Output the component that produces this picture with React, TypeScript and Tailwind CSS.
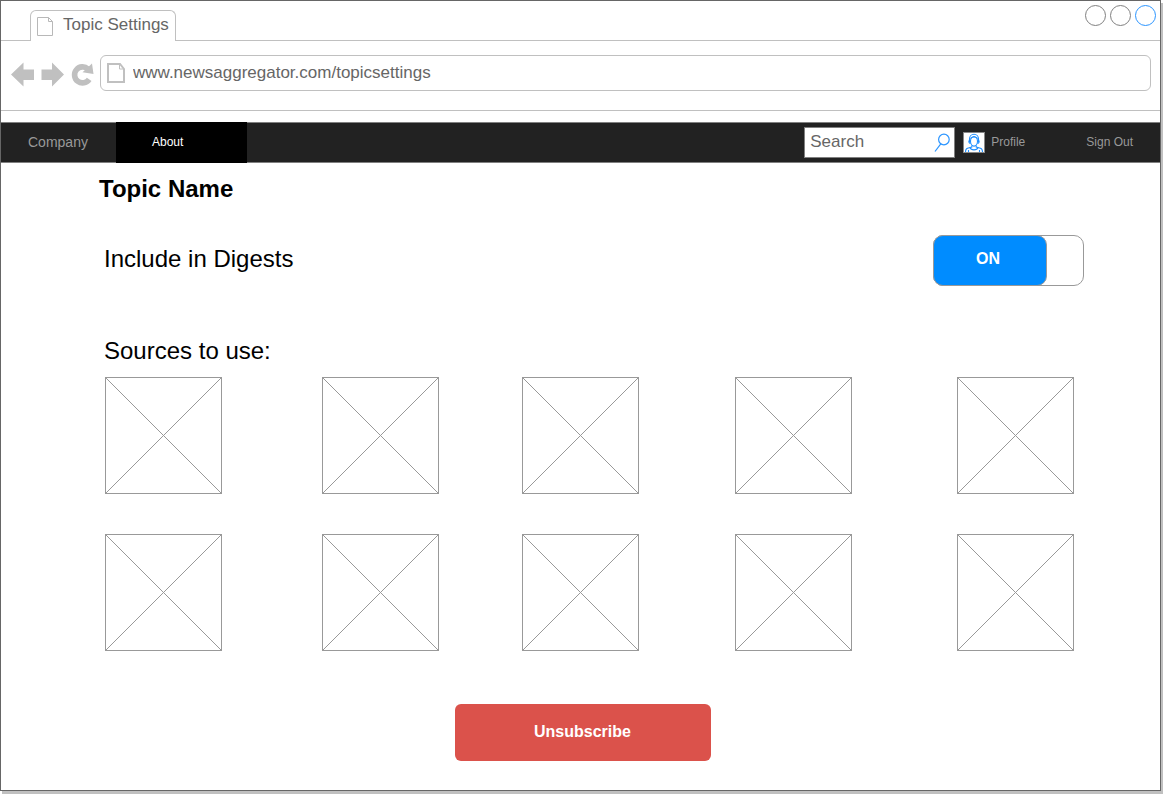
import { useState } from "react";

function PageIcon({ bold = false }: { bold?: boolean }) {
  return (
    <svg
      width="18"
      height="20"
      viewBox="0 0 18 20"
      fill="none"
      stroke={bold ? "#c0c0c0" : "#b8b8b8"}
      strokeWidth={bold ? 2 : 1}
      aria-hidden="true"
      className="shrink-0"
    >
      {bold ? (
        <>
          <path d="M1 1H13L17 6V19H1Z" />
          <path d="M12.500 1V6H17" strokeWidth="1" />
        </>
      ) : (
        <>
          <path d="M0.500 1.500H11.500L15.500 5.500V19.500H0.500Z" />
          <path d="M11.500 1.500V5.500H15.500" />
        </>
      )}
    </svg>
  );
}

function ArrowIcon({ flip = false }: { flip?: boolean }) {
  return (
    <svg width="24" height="26" viewBox="0 0 24 26" fill="#c0c0c0" aria-hidden="true">
      <path
        d={
          flip
            ? "M24 12.500L12 0.500V7.500H1.500V18H12V24.500Z"
            : "M1 12.500L13.500 0.500V7.500H24V18H13.500V24.500Z"
        }
      />
    </svg>
  );
}

function ReloadIcon() {
  return (
    <svg width="24" height="26" viewBox="0 0 24 26" aria-hidden="true">
      <path
        d="M19.200 17.400A8 8 0 1 1 18 7"
        fill="none"
        stroke="#c0c0c0"
        strokeWidth="5.600"
      />
      <path d="M22 1.500L23.500 12L12.500 10.200Z" fill="#c0c0c0" />
    </svg>
  );
}

function SearchIcon() {
  return (
    <svg
      width="16"
      height="20"
      viewBox="0 0 16 20"
      fill="none"
      stroke="#2b95ff"
      strokeWidth="1.200"
      aria-hidden="true"
    >
      <circle cx="9.900" cy="6.500" r="5.300" />
      <path d="M6.800 10.800L1 18.500" />
    </svg>
  );
}

function AvatarIcon() {
  return (
    <svg
      width="22"
      height="21"
      viewBox="0 0 22 21"
      fill="none"
      stroke="#1f8fff"
      strokeWidth="1.100"
      aria-hidden="true"
    >
      <rect x="0.500" y="0.500" width="21" height="20" fill="#fff" stroke="#888" strokeWidth="1" />
      <path d="M6.500 10V7A4.500 4.700 0 0 1 15.500 7V10" />
      <ellipse cx="11" cy="9.300" rx="3.500" ry="4.800" />
      <path d="M7.500 6.500C9.500 4.800 12.500 4.800 14.500 6.500" />
      <path d="M6.500 8.500C5.300 9 5.800 11 7.500 11.500M15.500 8.500C16.700 9 16.200 11 14.500 11.500" />
      <path d="M8.800 13.500V15L4.500 16.300C3 16.800 2.500 18 2.500 20M13.200 13.500V15L17.500 16.300C19 16.800 19.500 18 19.500 20" />
      <path d="M7 15.500C8 18.700 14 18.700 15 15.500M5.500 18V20M16.500 18V20" />
    </svg>
  );
}

function SourceTile({ label }: { label: string }) {
  return (
    <button type="button" aria-label={label} className="block size-[117px]">
      <svg width="117" height="117" viewBox="0 0 117 117" fill="none" stroke="#999" aria-hidden="true">
        <rect x="0.500" y="0.500" width="116" height="116" />
        <path d="M0.500 0.500L116.500 116.500M116.500 0.500L0.500 116.500" />
      </svg>
    </button>
  );
}

const sources = Array.from({ length: 10 }, (_, i) => `Source ${i + 1}`);

export default function App() {
  const [included, setIncluded] = useState(true);

  return (
    <div className="flex min-h-screen flex-col bg-white pr-0.5 pb-1 font-['Liberation_Sans',Arial,sans-serif] text-black">
      <div className="flex flex-1 flex-col border border-[#666] bg-white shadow-[2px_3px_0_#c0c0c0]">
        <div className="flex h-10 items-end">
          <div className="w-[29px] border-b border-[#c0c0c0]" />
          <div className="flex h-[31px] items-center gap-2 rounded-t-md border border-b-0 border-[#c0c0c0] px-1.5 text-[17px] leading-5 text-[#666]">
            <PageIcon />
            <span className="pb-0.5">Topic Settings</span>
          </div>
          <div className="flex h-full flex-1 justify-end gap-1 border-b border-[#c0c0c0] pt-1 pr-1">
            <button type="button" aria-label="Minimize" className="size-[21px] rounded-full border border-[#808080]" />
            <button type="button" aria-label="Maximize" className="size-[21px] rounded-full border border-[#808080]" />
            <button type="button" aria-label="Close" className="size-[21px] rounded-full border border-[#2b95ff]" />
          </div>
        </div>

        <div className="flex h-[70px] items-start border-b border-[#c0c0c0] px-[9px] pt-3.5">
          <div className="flex h-9 items-center gap-1.5 pt-1 pr-1.5">
            <button type="button" aria-label="Back">
              <ArrowIcon />
            </button>
            <button type="button" aria-label="Forward">
              <ArrowIcon flip />
            </button>
            <button type="button" aria-label="Reload">
              <ReloadIcon />
            </button>
          </div>
          <div className="flex h-9 flex-1 items-center gap-2 rounded-md border border-[#c0c0c0] px-1.5">
            <PageIcon bold />
            <input
              type="text"
              aria-label="Address"
              defaultValue="www.newsaggregator.com/topicsettings"
              className="min-w-0 flex-1 bg-transparent text-[17px] leading-5 text-[#666] outline-none"
            />
          </div>
        </div>

        <nav className="mt-[11px] flex h-[41px] items-stretch border-y border-[#808080] bg-[#222] text-xs text-[#999]">
          <a href="#company" className="flex w-[115px] items-center pb-0.5 pl-[27px] text-sm">
            Company
          </a>
          <a href="#about" className="-my-px flex w-[131px] items-center bg-black pb-0.5 pl-9 text-white">
            About
          </a>
          <div className="ml-auto flex items-center">
            <form role="search" className="flex h-[31px] w-[151px] items-center border border-[#808080] bg-white pr-1 pl-[5px]" onSubmit={(e) => e.preventDefault()}>
              <input
                type="text"
                aria-label="Search"
                placeholder="Search"
                className="min-w-0 flex-1 bg-transparent pb-0.5 text-[17px] leading-5 text-[#666] outline-none placeholder:text-[#666]"
              />
              <button type="submit" aria-label="Submit search">
                <SearchIcon />
              </button>
            </form>
            <a href="#profile" className="ml-2 flex items-center gap-1.5">
              <AvatarIcon />
              <span className="pb-0.5">Profile</span>
            </a>
            <a href="#signout" className="mr-[27px] ml-[61px] pb-0.5">
              Sign Out
            </a>
          </div>
        </nav>

        <main className="flex flex-col pt-3 pr-[86px] pb-7 pl-[104px]">
          <h1 className="-ml-1.5 text-2xl leading-7 font-bold">Topic Name</h1>

          <div className="-mr-2.5 mt-8 flex items-start justify-between">
            <label htmlFor="digests" className="-ml-px pt-2.5 text-2xl leading-7">
              Include in Digests
            </label>
            <label className="relative flex h-[51px] w-[151px] cursor-pointer rounded-[10px] border border-[#999]">
              <input
                id="digests"
                type="checkbox"
                role="switch"
                className="sr-only"
                checked={included}
                onChange={(e) => setIncluded(e.target.checked)}
              />
              <span
                className={
                  included
                    ? "-m-px flex w-[114px] items-center justify-center rounded-[10px] border border-[#999] bg-[#008cff] pr-1 pb-1 font-bold text-white"
                    : "-m-px ml-auto flex w-[114px] items-center justify-center rounded-[10px] border border-[#999] bg-[#eee] pb-1 font-bold text-[#666]"
                }
              >
                {included ? "ON" : "OFF"}
              </span>
            </label>
          </div>

          <h2 className="mt-[51px] -ml-px text-2xl leading-7">Sources to use:</h2>
          <div className="mt-3 grid grid-cols-[217fr_200fr_213fr_222fr_117px] gap-y-10">
            {sources.map((name) => (
              <SourceTile key={name} label={name} />
            ))}
          </div>

          <div className="mt-[53px] flex justify-center pr-3.5">
            <button
              type="button"
              className="h-[57px] w-64 rounded-md bg-[#db524b] pb-0.5 font-bold text-white"
            >
              Unsubscribe
            </button>
          </div>
        </main>
      </div>
    </div>
  );
}
